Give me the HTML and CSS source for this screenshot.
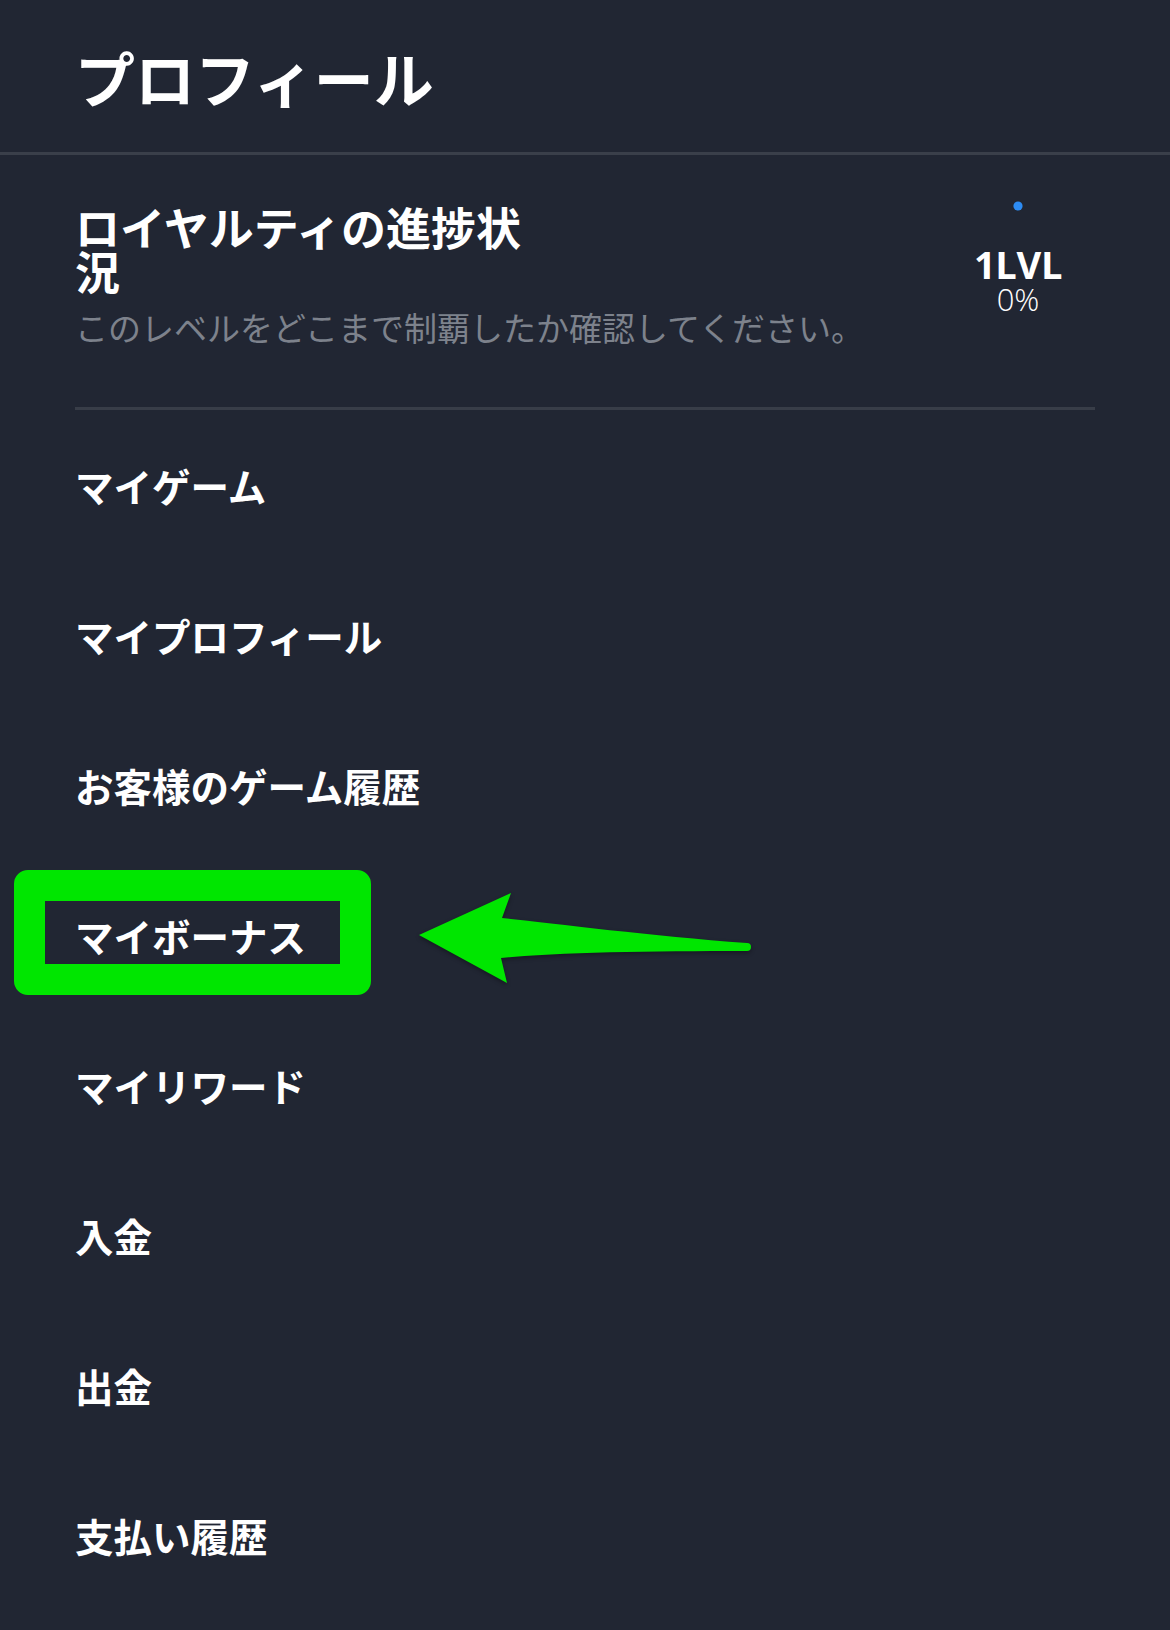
FILE: index.html
```html
<!DOCTYPE html>
<html lang="ja">
<head>
<meta charset="utf-8">
<title>プロフィール</title>
<link rel="stylesheet" href="styles.css">
</head>
<body>
<div class="page">
  <header class="header">
    <h1 class="title">プロフィール</h1>
  </header>

  <section class="loyalty">
    <div class="loyalty-text">
      <h2 class="loyalty-title">ロイヤルティの進捗状況</h2>
      <p class="loyalty-desc">このレベルをどこまで制覇したか確認してください。</p>
    </div>
    <div class="progress">
      <svg class="progress-ring" width="154" height="154" viewBox="0 0 154 154">
        <circle cx="77" cy="2" r="4.6" fill="#2d8cf4"/>
      </svg>
      <div class="progress-label">
        <span class="lvl">1LVL</span>
        <span class="pct">0%</span>
      </div>
    </div>
  </section>

  <nav class="menu">
    <a class="menu-item">マイゲーム</a>
    <a class="menu-item">マイプロフィール</a>
    <a class="menu-item">お客様のゲーム履歴</a>
    <a class="menu-item">マイボーナス</a>
    <a class="menu-item">マイリワード</a>
    <a class="menu-item">入金</a>
    <a class="menu-item">出金</a>
    <a class="menu-item">支払い履歴</a>
  </nav>

  <div class="highlight"></div>
  <svg class="arrow" width="350" height="115" viewBox="410 880 350 115">
    <path d="M419 935 L511 893 L502 918 C560 924 650 936 747 943 A4 4 0 0 1 747 951 C650 951 560 952 501 958 L507 983 Z" fill="#00e600"/>
  </svg>
</div>
</body>
</html>
```

FILE: styles.css
```css
* {
  box-sizing: border-box;
}

html, body {
  margin: 0;
  padding: 0;
  background: #212633;
}

body {
  font-family: "Noto Sans CJK JP", "Noto Sans", sans-serif;
  color: #ffffff;
}

.page {
  position: relative;
  width: 1170px;
  min-height: 1630px;
  background: #212633;
}

.header {
  padding: 47px 75px 45px;
  border-bottom: 3px solid #3a3f4a;
}

.title {
  margin: 0;
  font-size: 60px;
  line-height: 60px;
  font-weight: 700;
}

.loyalty {
  margin: 0 75px;
  height: 255px;
  border-bottom: 3px solid #383d48;
  display: flex;
  align-items: center;
  justify-content: space-between;
}

.loyalty-text {
  flex: 1;
  min-width: 0;
  padding-bottom: 11px;
}

.loyalty-title {
  margin: 0;
  max-width: 480px;
  font-size: 45px;
  line-height: 44px;
  font-weight: 700;
}

.loyalty-desc {
  margin: 14px 0 0;
  font-size: 33px;
  line-height: 40px;
  font-weight: 400;
  color: #7d828c;
  white-space: nowrap;
}

.progress {
  flex: 0 0 154px;
  width: 154px;
  height: 154px;
  display: grid;
  place-items: center;
}

.progress-ring {
  grid-area: 1 / 1;
  overflow: visible;
}

.progress-label {
  grid-area: 1 / 1;
  display: flex;
  flex-direction: column;
  align-items: center;
  padding-bottom: 3px;
  font-family: "Open Sans", "Noto Sans", sans-serif;
}

.lvl {
  font-size: 38px;
  line-height: 38px;
  font-weight: 700;
  letter-spacing: -0.3px;
}

.pct {
  font-size: 31px;
  line-height: 32px;
  font-weight: 300;
}

.menu {
  display: flex;
  flex-direction: column;
}

.menu-item {
  display: block;
  padding: 55.75px 75px;
  font-size: 38.5px;
  line-height: 38.5px;
  font-weight: 700;
  color: #ffffff;
  text-decoration: none;
}

.highlight {
  position: absolute;
  left: 14px;
  top: 870px;
  width: 357px;
  height: 125px;
  border: 31px solid #00e600;
  border-radius: 14px;
  pointer-events: none;
}

.arrow {
  position: absolute;
  left: 410px;
  top: 880px;
  overflow: visible;
  filter: drop-shadow(0 2px 2px rgba(0, 0, 0, 0.35));
  pointer-events: none;
}
```
